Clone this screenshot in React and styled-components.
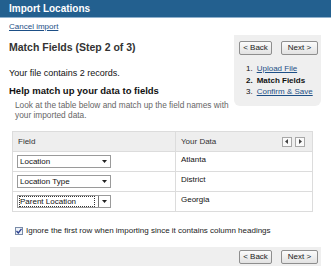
import React from "react";
import styled, { createGlobalStyle } from "styled-components";

const Global = createGlobalStyle`
  html, body { margin: 0; padding: 0; background: #fff; }
  body { font-family: "Liberation Sans", Arial, sans-serif; font-size: 8px; color: #222; }
  * { box-sizing: border-box; }
`;

const Page = styled.div`
  width: 331px;
  height: 266px;
  overflow: hidden;
  display: flex;
  flex-direction: column;
`;

const TitleBar = styled.div`
  height: 18px;
  background: #23608f;
  border-bottom: 1px solid #8fb0cc;
  color: #fff;
  font-weight: bold;
  font-size: 10px;
  line-height: 17px;
  padding-left: 9px;
`;

const Body = styled.div`
  padding: 0 10px 0 9px;
  display: flex;
  flex-direction: column;
`;

const LinkText = styled.a`
  color: #1d4f86;
  text-decoration: underline;
  cursor: pointer;
`;

const CancelLink = styled(LinkText)`
  margin-top: 4px;
  line-height: 10px;
  align-self: flex-start;
`;

const TopRow = styled.div`
  margin-top: 3px;
  display: flex;
  justify-content: space-between;
  align-items: flex-start;
`;

const Intro = styled.div`
  display: flex;
  flex-direction: column;
`;

const StepTitle = styled.div`
  margin-top: 6px;
  font-size: 10.5px;
  font-weight: bold;
  line-height: 13px;
  color: #333;
`;

const Records = styled.div`
  margin-top: 14px;
  font-size: 9px;
  line-height: 10px;
  color: #111;
`;

const HelpTitle = styled.div`
  margin-top: 7px;
  font-size: 9.5px;
  font-weight: bold;
  line-height: 12px;
  color: #111;
`;

const Desc = styled.div`
  margin-top: 3px;
  padding-left: 6px;
  font-size: 8.3px;
  line-height: 10px;
  color: #666;
  width: 224px;
`;

const StepPanel = styled.div`
  width: 87px;
  background: #efefef;
  border-radius: 0 0 6px 6px;
  padding: 6px 0 8px 5px;
`;

const ButtonRow = styled.div`
  display: flex;
  gap: ${(p) => p.$gap}px;
`;

const NavButton = styled.button`
  height: 14px;
  width: ${(p) => p.$w}px;
  padding: 0;
  font-family: "Liberation Sans", Arial, sans-serif;
  font-size: 8px;
  color: #222;
  background: linear-gradient(#fbfbfb, #e2e2e2);
  border: 1px solid #8e8e8e;
  border-radius: 2px;
  line-height: 12px;
`;

const StepList = styled.ol`
  margin: 8px 0 0 0;
  padding: 0 0 0 7px;
  list-style: none;
`;

const StepItem = styled.li`
  line-height: 11.5px;
  display: flex;
  gap: 4px;
  font-weight: ${(p) => (p.$current ? "bold" : "normal")};
  color: #111;
`;

const Table = styled.div`
  margin: 11px 8px 0 3px;
  border: 1px solid #dcdcdc;
  display: grid;
  grid-template-columns: 163px 1fr;
`;

const HeadCell = styled.div`
  height: 19px;
  background: #eeeeee;
  border-right: ${(p) => (p.$first ? "1px solid #dcdcdc" : "none")};
  padding-left: 5px;
  padding-right: 7px;
  display: flex;
  align-items: center;
  justify-content: space-between;
  color: #333;
`;

const Cell = styled.div`
  height: 20px;
  border-top: 1px solid #dcdcdc;
  border-right: ${(p) => (p.$first ? "1px solid #dcdcdc" : "none")};
  padding-left: ${(p) => (p.$first ? 4 : 5)}px;
  display: flex;
  align-items: ${(p) => (p.$first ? "center" : "flex-start")};
  padding-top: ${(p) => (p.$first ? 0 : 3)}px;
  color: #111;
`;

const ScrollButtons = styled.div`
  display: flex;
  gap: 3px;
`;

const ScrollButton = styled.div`
  width: 10px;
  height: 10px;
  border: 1px solid #a8a8a8;
  background: #fafafa;
  display: flex;
  align-items: center;
  justify-content: center;
`;

const Select = styled.div`
  width: 94px;
  height: 13px;
  border: 1px solid #9a9a9a;
  background: #fff;
  display: flex;
  align-items: center;
  padding-left: 2px;
`;

const SelectText = styled.span`
  flex: 1;
  line-height: 9px;
  outline: ${(p) => (p.$focused ? "1px dotted #333" : "none")};
  margin-right: ${(p) => (p.$focused ? "4px" : "0")};
  color: #111;
`;

const SelectArrow = styled.span`
  width: 12px;
  height: 100%;
  display: flex;
  align-items: center;
  justify-content: center;
  border-left: ${(p) => (p.$focused ? "1px solid #777" : "none")};
`;

const CheckRow = styled.label`
  margin: 13px 0 0 6px;
  display: flex;
  align-items: center;
  gap: 3px;
  line-height: 12px;
`;

const CheckBox = styled.span`
  width: 8px;
  height: 8px;
  border: 1px solid #7a8ca8;
  background: #eef2f8;
  display: flex;
  align-items: center;
  justify-content: center;
`;

const Footer = styled.div`
  margin: 10px 10px 0 10px;
  height: 21px;
  background: #efefef;
  display: flex;
  justify-content: flex-end;
  align-items: center;
  gap: 9px;
  padding-right: 3px;
`;

const Tri = ({ dir }) => (
  <svg width="4" height="5" viewBox="0 0 4 5">
    {dir === "left" ? (
      <polygon points="3,0 3,5 0,2.5" fill="#444" />
    ) : (
      <polygon points="1,0 1,5 4,2.5" fill="#444" />
    )}
  </svg>
);

const Down = () => (
  <svg width="5" height="3" viewBox="0 0 5 3">
    <polygon points="0,0 5,0 2.5,3" fill="#222" />
  </svg>
);

const FieldSelect = ({ value, focused }) => (
  <Select>
    <SelectText $focused={focused}>{value}</SelectText>
    <SelectArrow $focused={focused}>
      <Down />
    </SelectArrow>
  </Select>
);

const rows = [
  { field: "Location", data: "Atlanta" },
  { field: "Location Type", data: "District" },
  { field: "Parent Location", data: "Georgia", focused: true },
];

export default function App() {
  return (
    <Page>
      <Global />
      <TitleBar>Import Locations</TitleBar>
      <Body>
        <CancelLink>Cancel import</CancelLink>
        <TopRow>
          <Intro>
            <StepTitle>Match Fields (Step 2 of 3)</StepTitle>
            <Records>Your file contains 2 records.</Records>
            <HelpTitle>Help match up your data to fields</HelpTitle>
            <Desc>
              Look at the table below and match up the field names with
              <br />
              your imported data.
            </Desc>
          </Intro>
          <StepPanel>
            <ButtonRow $gap={9}>
              <NavButton $w={33}>&lt; Back</NavButton>
              <NavButton $w={37}>Next &gt;</NavButton>
            </ButtonRow>
            <StepList>
              <StepItem>
                <span>1.</span>
                <LinkText>Upload File</LinkText>
              </StepItem>
              <StepItem $current>
                <span>2.</span>
                <span>Match Fields</span>
              </StepItem>
              <StepItem>
                <span>3.</span>
                <LinkText>Confirm &amp; Save</LinkText>
              </StepItem>
            </StepList>
          </StepPanel>
        </TopRow>
        <Table>
          <HeadCell $first>Field</HeadCell>
          <HeadCell>
            <span>Your Data</span>
            <ScrollButtons>
              <ScrollButton>
                <Tri dir="left" />
              </ScrollButton>
              <ScrollButton>
                <Tri dir="right" />
              </ScrollButton>
            </ScrollButtons>
          </HeadCell>
          {rows.map((r) => (
            <React.Fragment key={r.field}>
              <Cell $first>
                <FieldSelect value={r.field} focused={r.focused} />
              </Cell>
              <Cell>{r.data}</Cell>
            </React.Fragment>
          ))}
        </Table>
        <CheckRow>
          <CheckBox>
            <svg width="6" height="6" viewBox="0 0 6 6">
              <polyline points="0.5,3 2.3,5 5.5,0.8" fill="none" stroke="#2a3f8f" strokeWidth="1.3" />
            </svg>
          </CheckBox>
          <span>Ignore the first row when importing since it contains column headings</span>
        </CheckRow>
      </Body>
      <Footer>
        <NavButton $w={33}>&lt; Back</NavButton>
        <NavButton $w={37}>Next &gt;</NavButton>
      </Footer>
    </Page>
  );
}
